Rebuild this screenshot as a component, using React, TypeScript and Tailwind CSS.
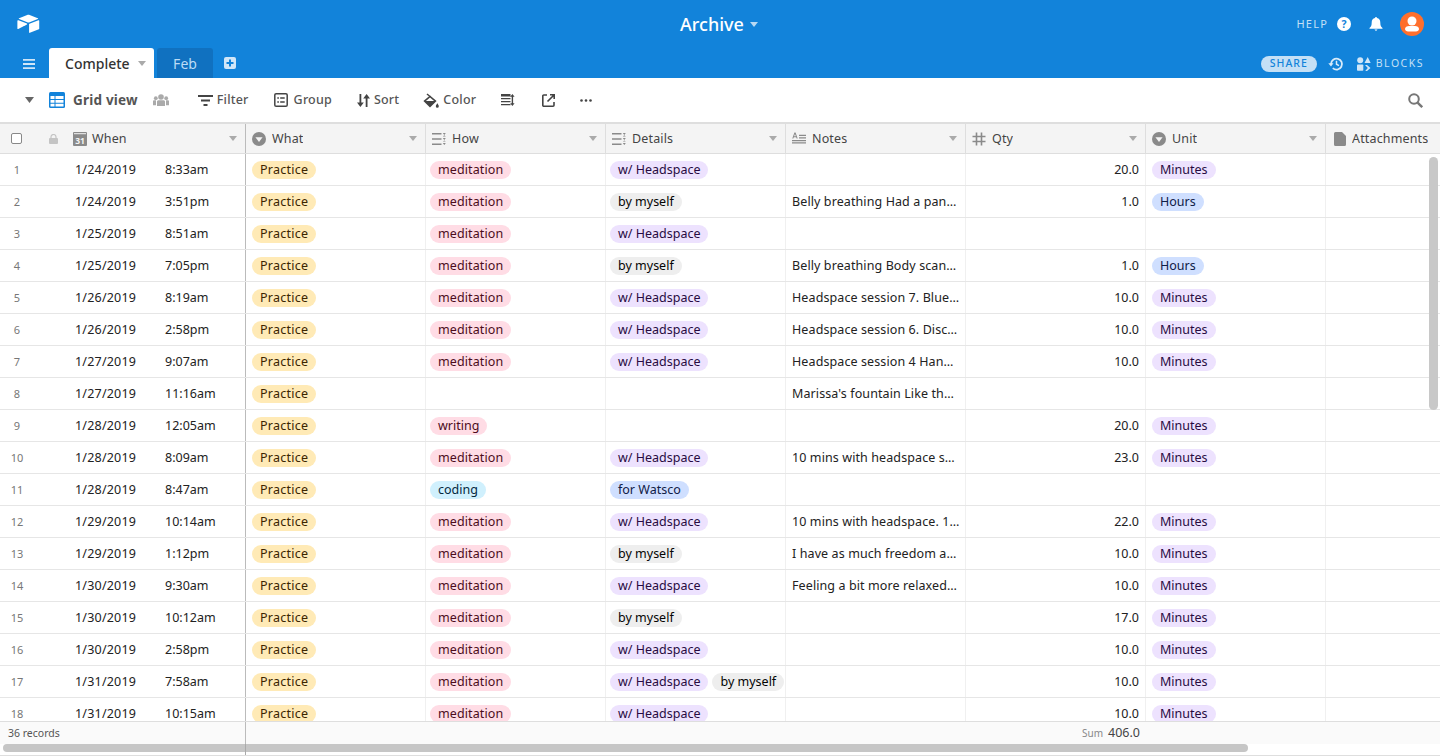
import type { ReactNode } from 'react';

const font = { fontFamily: '"Noto Sans", sans-serif' };

type Row = {
  date: string;
  time: string;
  how?: string;
  details?: string[];
  notes?: string;
  qty?: string;
  unit?: string;
};

const H = 'w/ Headspace';
const M = 'by myself';

const rows: Row[] = [
  { date: '1/24/2019', time: '8:33am', how: 'meditation', details: [H], qty: '20.0', unit: 'Minutes' },
  { date: '1/24/2019', time: '3:51pm', how: 'meditation', details: [M], notes: 'Belly breathing Had a pan…', qty: '1.0', unit: 'Hours' },
  { date: '1/25/2019', time: '8:51am', how: 'meditation', details: [H] },
  { date: '1/25/2019', time: '7:05pm', how: 'meditation', details: [M], notes: 'Belly breathing Body scan…', qty: '1.0', unit: 'Hours' },
  { date: '1/26/2019', time: '8:19am', how: 'meditation', details: [H], notes: 'Headspace session 7. Blue…', qty: '10.0', unit: 'Minutes' },
  { date: '1/26/2019', time: '2:58pm', how: 'meditation', details: [H], notes: 'Headspace session 6. Disc…', qty: '10.0', unit: 'Minutes' },
  { date: '1/27/2019', time: '9:07am', how: 'meditation', details: [H], notes: 'Headspace session 4 Han…', qty: '10.0', unit: 'Minutes' },
  { date: '1/27/2019', time: '11:16am', notes: "Marissa's fountain Like th…" },
  { date: '1/28/2019', time: '12:05am', how: 'writing', qty: '20.0', unit: 'Minutes' },
  { date: '1/28/2019', time: '8:09am', how: 'meditation', details: [H], notes: '10 mins with headspace s…', qty: '23.0', unit: 'Minutes' },
  { date: '1/28/2019', time: '8:47am', how: 'coding', details: ['for Watsco'] },
  { date: '1/29/2019', time: '10:14am', how: 'meditation', details: [H], notes: '10 mins with headspace. 1…', qty: '22.0', unit: 'Minutes' },
  { date: '1/29/2019', time: '1:12pm', how: 'meditation', details: [M], notes: 'I have as much freedom a…', qty: '10.0', unit: 'Minutes' },
  { date: '1/30/2019', time: '9:30am', how: 'meditation', details: [H], notes: 'Feeling a bit more relaxed…', qty: '10.0', unit: 'Minutes' },
  { date: '1/30/2019', time: '10:12am', how: 'meditation', details: [M], qty: '17.0', unit: 'Minutes' },
  { date: '1/30/2019', time: '2:58pm', how: 'meditation', details: [H], qty: '10.0', unit: 'Minutes' },
  { date: '1/31/2019', time: '7:58am', how: 'meditation', details: [H, M], qty: '10.0', unit: 'Minutes' },
  { date: '1/31/2019', time: '10:15am', how: 'meditation', details: [H], qty: '10.0', unit: 'Minutes' },
];

const pillColors: Record<string, string> = {
  Practice: 'bg-[#ffeab6] text-[#3b2501] tracking-[0.25px]',
  meditation: 'bg-[#ffdce5] text-[#4c0c1c] tracking-[0.1px]',
  writing: 'bg-[#ffdce5] text-[#4c0c1c]',
  coding: 'bg-[#d0f0fd] text-[#04283f]',
  [H]: 'bg-[#ede2fe] text-[#280b42]',
  [M]: 'bg-[#eeeeee] text-[#040404]',
  'for Watsco': 'bg-[#cfdfff] text-[#102046]',
  Minutes: 'bg-[#ede2fe] text-[#280b42]',
  Hours: 'bg-[#cfdfff] text-[#102046]',
};

function Pill({ label }: { label: string }) {
  return (
    <span className={`h-[18px] shrink-0 rounded-full px-2 text-[12.5px] leading-[18px] whitespace-nowrap ${pillColors[label]}`}>
      {label}
    </span>
  );
}

function Caret({ className = '' }: { className?: string }) {
  return (
    <svg viewBox="0 0 8 5" className={`h-[5px] w-2 shrink-0 ${className}`} fill="currentColor">
      <path d="M0 0h8L4 5z" />
    </svg>
  );
}

function SelectIcon() {
  return (
    <svg viewBox="0 0 14 14" className="h-3.5 w-3.5 shrink-0">
      <circle cx="7" cy="7" r="7" fill="#8a8a8a" />
      <path d="M3.4 5.2h7.2L7 10z" fill="#f4f4f4" />
    </svg>
  );
}

function MultiIcon() {
  return (
    <svg viewBox="0 0 14 14" className="h-3.5 w-3.5 shrink-0" fill="#8a8a8a">
      <path d="M0 1h9.5v1.6H0zM0 6.2h9.5v1.6H0zM0 11.4h9.5V13H0zM10.8 1h3l-1.5 2zM10.8 4.4h3l-1.5-1.1zM10.8 6h3l-1.5 2zM10.8 11h3l-1.5 2zM10.8 9.6h3l-1.5-1.2z" />
    </svg>
  );
}

function NotesIcon() {
  return (
    <svg viewBox="0 0 15 14" className="h-3.5 w-3.5 shrink-0" fill="#8a8a8a">
      <path d="M2.6 0h1.2l2.3 6.4H5L4.5 5H1.9l-.5 1.4H.3zm.6 1.6L2.2 4.1H4.2zM7.5 2.5H15v1.3H7.5zM7.5 5.1H15v1.3H7.5zM0 8h15v1.3H0zM0 10.6h15v1.3H0z" />
    </svg>
  );
}

function QtyIcon() {
  return (
    <svg viewBox="0 0 14 14" className="h-3.5 w-3.5 shrink-0" stroke="#8a8a8a" strokeWidth="1.6" fill="none">
      <path d="M4.5 0.5v13M9.5 0.5v13M0.5 4.5h13M0.5 9.5h13" />
    </svg>
  );
}

function CalendarIcon() {
  return (
    <svg viewBox="0 0 14 14" className="h-3.5 w-3.5 shrink-0">
      <rect width="14" height="14" rx="1" fill="#8a8a8a" />
      <rect x="1" y="1.2" width="12" height="1" fill="#f4f4f4" />
      <text x="7" y="12" textAnchor="middle" fontSize="8.5" fontWeight="700" fill="#f4f4f4" style={font}>31</text>
    </svg>
  );
}

function FileIcon() {
  return (
    <svg viewBox="0 0 12 14" className="ml-0.5 h-3.5 w-3 shrink-0" fill="#8a8a8a">
      <path d="M1.5 0H8l4 4v8.500a1.500 1.500 0 0 1-1.500 1.500h-9A1.500 1.500 0 0 1 0 12.500v-11A1.500 1.500 0 0 1 1.500 0z" />
    </svg>
  );
}

function HeadCell({ icon, label, caret = true }: { icon: ReactNode; label: string; caret?: boolean }) {
  return (
    <div className="flex h-full w-[180px] shrink-0 items-center border-r border-[#dedede] pl-1.5 pr-2">
      {icon}
      <span className="ml-1.5 truncate pt-px text-[12.5px] tracking-[0.15px] text-[#444]">{label}</span>
      {caret && <Caret className="ml-auto text-[#aaa]" />}
    </div>
  );
}

function Cell({ children, className = '' }: { children?: ReactNode; className?: string }) {
  return <div className={`flex h-full w-[180px] shrink-0 items-center gap-1 overflow-hidden border-r border-[#f0f0f0] px-1.5 ${className}`}>{children}</div>;
}

function ToolButton({ icon, label, className = '' }: { icon: ReactNode; label: string; className?: string }) {
  return (
    <div className={`flex items-center ${className}`}>
      {icon}
      <span className="ml-1 pt-px text-[12.5px] font-medium tracking-[0.2px] text-[#555]">{label}</span>
    </div>
  );
}

function TopBar() {
  return (
    <header className="h-[78px] shrink-0 bg-[#1283da] text-white">
      <div className="relative flex h-12 items-center pl-[17px] pr-4">
        <svg viewBox="0 0 24 20" className="h-[20px] w-[23px]" fill="#fff">
          <path d="M10.6.5 2.200 3.900c-.5.2-.5.8 0 1l8.500 3.400c.8.3 1.700.3 2.500 0l8.500-3.400c.5-.2.5-.8 0-1L13.200.5c-.8-.3-1.800-.3-2.600 0z" />
          <path d="M12.600 10.300v8.400c0 .4.4.7.8.5l9.400-3.600c.3-.1.4-.3.4-.6V6.600c0-.4-.4-.7-.8-.5l-9.400 3.700c-.3.1-.4.3-.4.5z" />
          <path d="M10.400 10.600 7.600 12l-.3.2-6 2.900c-.4.2-.9-.1-.9-.5V6.700c0-.2.1-.3.2-.4l.3-.2c.1-.1.4-.1.6 0l8.900 3.500c.4.2.4.8 0 1z" />
        </svg>
        <div className="absolute left-[680px] top-0 flex h-12 items-center">
          <span className="text-[18px] font-medium">Archive</span>
          <Caret className="ml-[6px] text-[#b8d9f3]" />
        </div>
        <div className="ml-auto flex items-center">
          <span className="text-[11px] tracking-[1.2px] text-[#c4e0f6]">HELP</span>
          <svg viewBox="0 0 14 14" className="ml-[9px] h-3.5 w-3.5">
            <circle cx="7" cy="7" r="7" fill="#fff" />
            <text x="7" y="11" textAnchor="middle" fontSize="10.5" fontWeight="700" fill="#1283da" style={font}>?</text>
          </svg>
          <svg viewBox="0 0 14 14" className="ml-[18px] h-3.5 w-3.5" fill="#fff">
            <path d="M7 0a1 1 0 0 1 1 1c2.200.4 3.300 2.200 3.300 4.400 0 3 .7 4.300 2.200 5.600v.7H.5V11C2 9.700 2.700 8.400 2.700 5.400 2.700 3.200 3.800 1.400 6 1a1 1 0 0 1 1-1zM5.400 12.600h3.200L7 14z" />
          </svg>
          <svg viewBox="0 0 24 24" className="ml-[17px] h-6 w-6">
            <circle cx="12" cy="12" r="12" fill="#ff6f2c" />
            <circle cx="12" cy="9" r="4.500" fill="#fff" />
            <path d="M5 17c0-2 2-3 4-3h6c2 0 4 1 4 3 0 1.500-1.500 2.500-3 2.500H8c-1.500 0-3-1-3-2.500z" fill="#fff" />
          </svg>
        </div>
      </div>
      <div className="flex h-[30px] items-end pr-4">
        <svg viewBox="0 0 12 10" className="mb-[9px] ml-[23px] h-2.5 w-3" fill="#d0e6f8">
          <path d="M0 0h12v1.800H0zM0 4.100h12v1.800H0zM0 8.200h12V10H0z" />
        </svg>
        <div className="ml-[14px] flex h-[30px] w-[105px] items-center rounded-t-[3px] bg-white pl-4 pr-2">
          <span className="text-[14px] font-medium text-[#333]">Complete</span>
          <Caret className="ml-auto text-[#aaa]" />
        </div>
        <div className="ml-[3px] flex h-[30px] w-[56px] items-center justify-center rounded-t-[3px] bg-[#1071c0] text-[14px] text-[#bcdcf5]">Feb</div>
        <svg viewBox="0 0 12 12" className="mb-[9px] ml-[11px] h-3 w-3">
          <rect width="12" height="12" rx="2" fill="#d0e6f8" />
          <path d="M5 2.500h2V5h2.500v2H7v2.500H5V7H2.500V5H5z" fill="#1283da" />
        </svg>
        <div className="mb-[6px] ml-auto flex items-center">
          <span className="flex h-4 w-14 items-center justify-center rounded-full bg-[#c4e0f6] text-[10.5px] font-medium tracking-[1px] text-[#1283da]">SHARE</span>
          <svg viewBox="0 0 16 14" className="ml-[11px] h-3.5 w-4" fill="none" stroke="#d8ebfa" strokeWidth="1.800">
            <path d="M3 7a5.500 5.500 0 1 1 1.800 4.200" />
            <path d="M8.500 3.800V7.200l2.500 1.400" strokeWidth="1.500" />
            <path d="M0.300 6.200h5.200L3 9.400z" fill="#d8ebfa" stroke="none" />
          </svg>
          <svg viewBox="0 0 14 14" className="ml-[13px] h-3.5 w-3.5" fill="#d0e6f8">
            <circle cx="3.200" cy="3.300" r="3" />
            <path d="M10.700 0l3 6h-6.200z" />
            <rect x="0" y="7.500" width="6.300" height="6.300" rx="0.800" />
            <path d="M8 8h2l3.500 3-3.500 3H8.200l2.600-3z" />
          </svg>
          <span className="ml-[5px] text-[10.5px] tracking-[1.5px] text-[#c4e0f6]">BLOCKS</span>
        </div>
      </div>
    </header>
  );
}

function Toolbar() {
  return (
    <div className="flex h-[44px] shrink-0 items-center pl-[25px] pr-[17px]">
      <svg viewBox="0 0 9 6" className="h-1.5 w-[9px] text-[#666]" fill="currentColor"><path d="M0 0h9L4.500 6z" /></svg>
      <svg viewBox="0 0 16 16" className="ml-[15px] h-4 w-4">
        <rect width="16" height="16" rx="1.500" fill="#1283da" />
        <path d="M1.500 4h13v3h-13zM1.500 8h4v2.800h-4zM6.500 8h8v2.800h-8zM1.500 11.800h4v2.700h-4zM6.500 11.800h8v2.700h-8z" fill="#fff" />
        <path d="M5.500 4h1v3h-1z" fill="#1283da" />
      </svg>
      <span className="ml-2 pt-px text-[13.5px] font-bold tracking-[0.2px] text-[#555]">Grid view</span>
      <svg viewBox="0 0 16 12" className="ml-[15px] h-3 w-4" fill="#aaa">
        <circle cx="8" cy="3" r="2.800" />
        <circle cx="2.800" cy="4.200" r="1.900" />
        <circle cx="13.200" cy="4.200" r="1.900" />
        <path d="M4 7.500c0-.8 1-1.300 2-1.300h4c1 0 2 .5 2 1.300V12H4zM0 7.300c0-.6.6-1 1.300-1H3v5H0zM13 6.300h1.700c.7 0 1.300.4 1.300 1v4h-3z" />
      </svg>
      <ToolButton
        className="ml-[29px]"
        label="Filter"
        icon={
          <svg viewBox="0 0 15 11" className="h-[11px] w-[15px]" fill="#444">
            <path d="M0 0h15v2H0zM3 4.500h9v2H3zM5.500 9h4v2h-4z" />
          </svg>
        }
      />
      <ToolButton
        className="ml-[25px]"
        label="Group"
        icon={
          <svg viewBox="0 0 14 14" className="mr-[2px] h-3.5 w-3.5" fill="none" stroke="#444" strokeWidth="1.500">
            <rect x=".8" y=".8" width="12.400" height="12.400" rx="1.300" />
            <path d="M3.300 5h1.600M6.200 5h4.500M3.300 9h1.600M6.200 9h4.500" />
          </svg>
        }
      />
      <ToolButton
        className="ml-[25px]"
        label="Sort"
        icon={
          <svg viewBox="0 0 13 13" className="h-[13px] w-[13px]" fill="#444">
            <path d="M2.500 0h1.800v8.500H6.800L3.400 13 0 8.500h2.500zM8.700 13h1.800V4.500H13L9.600 0 6.200 4.500h2.500z" />
          </svg>
        }
      />
      <ToolButton
        className="ml-6"
        label="Color"
        icon={
          <svg viewBox="0 0 16 15" className="h-[15px] w-4" fill="#444">
            <path fillRule="evenodd" d="M7 2.500 13.600 8 7 14.500.4 8zM7 4.500 2.900 8h8.200z" />
            <path d="M3.500 1.500 4.500.5 8 3.500 7 4.300zM14.300 10.200s-1.500 2-1.500 3a1.500 1.500 0 0 0 3 0c0-1-1.500-3-1.500-3z" />
          </svg>
        }
      />
      <svg viewBox="0 0 14 12" className="ml-[25px] h-3 w-3.5" fill="#444">
        <path d="M0 0h9.500v2.500H0zM0 4h9.500v1.200H0zM0 7h9.500v1.200H0zM0 10h9.500v1.200H0zM11.400 0l2.200 2.700h-1.500v6.600h1.500L11.400 12 9.200 9.300h1.500V2.700H9.200z" />
      </svg>
      <svg viewBox="0 0 13 13" className="ml-[27px] h-[13px] w-[13px]" fill="none" stroke="#444" strokeWidth="1.600">
        <path d="M5 1H1.800A1 1 0 0 0 .8 2v9.200a1 1 0 0 0 1 1H11a1 1 0 0 0 1-1V8" />
        <path d="M5.500 7.500 12 1M8 .8h4.200V5" />
      </svg>
      <svg viewBox="0 0 12 3" className="ml-[25px] h-[3px] w-3" fill="#444">
        <circle cx="1.500" cy="1.500" r="1.300" />
        <circle cx="6" cy="1.500" r="1.300" />
        <circle cx="10.500" cy="1.500" r="1.300" />
      </svg>
      <svg viewBox="0 0 15 15" className="ml-auto h-[15px] w-[15px]" fill="none" stroke="#777" strokeWidth="2">
        <circle cx="6" cy="6" r="4.800" />
        <path d="m9.600 9.600 4.600 4.600" strokeWidth="2.400" />
      </svg>
    </div>
  );
}

function HeaderRow() {
  return (
    <div className="flex h-[32px] shrink-0 border-b border-t-[2px] border-[#dedede] bg-[#f4f4f4]">
      <div className="flex h-full w-[246px] shrink-0 items-center border-r border-[#bbb] pr-2">
        <span className="ml-[11px] h-[11px] w-[11px] rounded-[2px] border border-[#888] bg-white" />
        <svg viewBox="0 0 9 10" className="ml-[27px] h-2.5 w-[9px]" fill="#c4c4c4">
          <rect y="4" width="9" height="6" rx="1" />
          <path d="M2 4.500V3a2.500 2.500 0 0 1 5 0v1.500" fill="none" stroke="#c4c4c4" strokeWidth="1.200" />
        </svg>
        <span className="ml-[15px]"><CalendarIcon /></span>
        <span className="ml-[5px] pt-px text-[12.5px] tracking-[0.15px] text-[#444]">When</span>
        <Caret className="ml-auto text-[#aaa]" />
      </div>
      <HeadCell icon={<SelectIcon />} label="What" />
      <HeadCell icon={<MultiIcon />} label="How" />
      <HeadCell icon={<MultiIcon />} label="Details" />
      <HeadCell icon={<NotesIcon />} label="Notes" />
      <HeadCell icon={<QtyIcon />} label="Qty" />
      <HeadCell icon={<SelectIcon />} label="Unit" />
      <HeadCell icon={<FileIcon />} label="Attachments" caret={false} />
    </div>
  );
}

function DataRow({ row, index }: { row: Row; index: number }) {
  return (
    <div className="flex h-8 shrink-0 border-b border-[#e6e6e6] text-[12.5px] text-[#222]">
      <div className="flex h-full w-[246px] shrink-0 items-center border-r border-[#bbb] pt-px">
        <span className="w-[34px] text-center text-[11px] text-[#777]">{index + 1}</span>
        <span className="ml-[41px] w-[90px] tracking-[0.2px]">{row.date}</span>
        <span>{row.time}</span>
      </div>
      <Cell><Pill label="Practice" /></Cell>
      <Cell className="!pl-1">{row.how && <Pill label={row.how} />}</Cell>
      <Cell className="!pl-1">{row.details?.map((d) => <Pill key={d} label={d} />)}</Cell>
      <Cell className="!pr-0.5"><span className="truncate pt-px tracking-[0.1px]">{row.notes}</span></Cell>
      <Cell className="justify-end pt-px">{row.qty}</Cell>
      <Cell>{row.unit && <Pill label={row.unit} />}</Cell>
      <Cell />
    </div>
  );
}

export default function App() {
  return (
    <div className="flex h-screen flex-col overflow-hidden bg-white" style={font}>
      <TopBar />
      <Toolbar />
      <HeaderRow />
      <div className="relative flex min-h-0 flex-1 flex-col overflow-hidden">
        <div className="min-h-0 flex-1 overflow-hidden">
          {rows.map((row, i) => (
            <DataRow key={i} row={row} index={i} />
          ))}
        </div>
        <div className="absolute right-[2px] top-[3px] h-[253px] w-[9px] rounded-full bg-[#c8c8c8]" />
        <div className="flex h-[23px] shrink-0 border-t border-[#dedede] bg-[#fafafa]">
          <div className="flex w-[246px] shrink-0 items-center border-r border-[#bbb] pl-2 pt-px text-[10.5px] text-[#555]">36 records</div>
          <div className="flex w-[900px] items-center justify-end pr-[6px] pt-px">
            <span className="text-[10px] text-[#888]">Sum</span>
            <span className="ml-[5px] text-[12.5px] text-[#444]">406.0</span>
          </div>
        </div>
        <div className="relative h-3 shrink-0 border-b border-[#dedede] bg-white">
          <div className="ml-[3px] h-2 w-[1245px] rounded-full bg-[#c6c6c6]" />
          <div className="absolute bottom-0 left-[245px] top-0 w-px bg-[#aaa]" />
        </div>
      </div>
    </div>
  );
}
